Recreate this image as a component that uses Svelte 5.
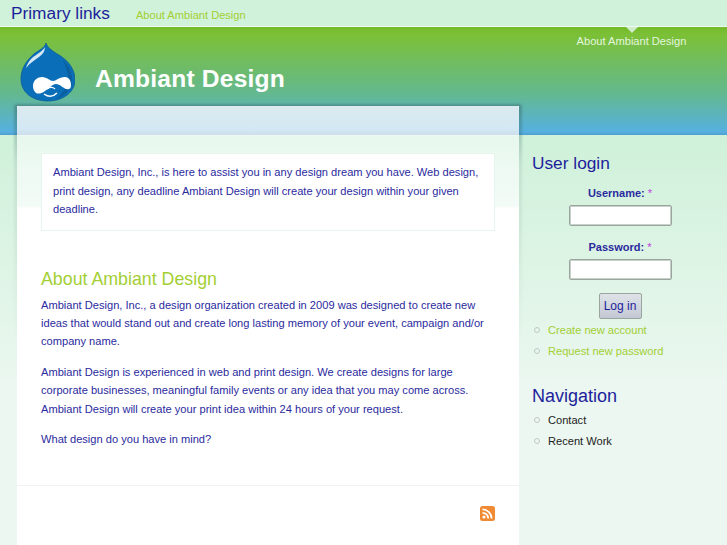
<script>
  const sidebarLinks = ['Create new account', 'Request new password'];
  const navLinks = ['Contact', 'Recent Work'];
</script>

<div class="top">
  <h2>Primary links</h2>
  <a href="#top" class="toplink">About Ambiant Design</a>
</div>

<header>
  <div class="brand">
    <svg class="logo" width="56" height="62" viewBox="0 0 56 62">
      <path d="M27 1C28 5 33 9 40 13C50 19 56 28 56 38C56 50 44 59 29 59C13 59 2 50 2 37C2 26 8 18 15 12C20 8 26 6 27 1z" fill="#0a6fb8" stroke="#0a5a9a" stroke-width=".8"/>
      <path d="M44 18C51 25 54 33 53 41C51 49 45 54 38 57C45 50 50 42 49 33C48 28 46 23 44 18z" fill="#0b5f9f"/>
      <path d="M26 5C24 9 18 12 13 16C10 19 8 22 7 26C11 21 16 18 20 15C24 12 26 9 26 5z" fill="#d6e7f4"/>
      <path d="M14 44C14 38 19 35 23 35C28 35 31 39 34 39C37 39 40 35 46 35C50 35 52 39 52 43C52 47 50 48 47 47C44 46 41 42 37 42C33 42 31 46 26 49C22 52 19 52 17 51C15 49 14 47 14 44z" fill="#fff"/>
      <path d="M25 52C29 55 34 55 38 51" fill="none" stroke="#fff" stroke-width="1.5"/>
      <path d="M28 47C31 45 34 45 36 47" fill="none" stroke="#fff" stroke-width="1.2"/>
    </svg>
    <h1>Ambiant Design</h1>
  </div>
  <nav class="secondary">
    <span class="caret"></span>
    <a href="#top">About Ambiant Design</a>
  </nav>
</header>

<div class="layout">
  <main>
    <div class="panel-head"></div>
    <div class="panel-body">
      <div class="mission">Ambiant Design, Inc., is here to assist you in any design dream you have. Web design, print design, any deadline Ambiant Design will create your design within your given deadline.</div>
      <h2 class="title">About Ambiant Design</h2>
      <p>Ambiant Design, Inc., a design organization created in 2009 was designed to create new ideas that would stand out and create long lasting memory of your event, campaign and/or company name.</p>
      <p>Ambiant Design is experienced in web and print design. We create designs for large corporate businesses, meaningful family events or any idea that you may come across. Ambiant Design will create your print idea within 24 hours of your request.</p>
      <p>What design do you have in mind?</p>
    </div>
    <footer>
      <svg width="15" height="15" viewBox="0 0 15 15">
        <rect width="15" height="15" rx="2.5" fill="#f08a34"/>
        <circle cx="4" cy="11" r="1.6" fill="#fff"/>
        <path d="M2.5 6.8a5.7 5.7 0 0 1 5.7 5.7M2.5 3.4a9.1 9.1 0 0 1 9.1 9.1" fill="none" stroke="#fff" stroke-width="1.8"/>
      </svg>
    </footer>
  </main>

  <aside>
    <h2>User login</h2>
    <form>
      <label for="u">Username: <span>*</span></label>
      <input id="u" type="text" />
      <label for="p">Password: <span>*</span></label>
      <input id="p" type="password" />
      <button type="button">Log in</button>
    </form>
    <ul class="green">
      {#each sidebarLinks as l}
        <li><a href="#top">{l}</a></li>
      {/each}
    </ul>
    <h2 class="nav-title">Navigation</h2>
    <ul class="nav-list">
      {#each navLinks as l}
        <li><a href="#top">{l}</a></li>
      {/each}
    </ul>
  </aside>
</div>

<style>
  :global(body) {
    margin: 0;
    height: 545px;
    overflow: hidden;
    font-family: "Liberation Sans", Arial, sans-serif;
    font-size: 11.1px;
    color: #2a2a9e;
    background: linear-gradient(#cff1d9 135px, #ebf7f0 385px);
  }
  a { text-decoration: none; }
  h1, h2, p, ul { margin: 0; padding: 0; }

  .top {
    height: 26px;
    display: flex;
    align-items: center;
    padding-left: 11px;
    background: #d0f2da;
    border-bottom: 1px solid #eefaf0;
  }
  .top h2 { font-size: 17.3px; font-weight: normal; color: #1e1e9c; line-height: 24px; }
  .toplink { margin-left: 26px; margin-top: 3px; color: #a3cf34; }

  header {
    height: 108px;
    display: flex;
    justify-content: space-between;
    background: linear-gradient(#74bb2a, #7cc038 8%, #64b98c 60%, #56b0e0 97%, #4d9fd0);
  }
  .brand { display: flex; align-items: flex-start; padding: 15px 0 0 19px; }
  .logo { display: block; }
  h1 { margin: 22px 0 0 20px; font-size: 24.6px; line-height: 30px; color: #fff; letter-spacing: .2px; }
  .secondary { width: 151px; margin-right: 20px; text-align: center; color: #e4f6dc; }
  .secondary a { color: #e4f6dc; display: block; margin-top: 2px; }
  .caret {
    display: block;
    width: 0;
    margin: 0 auto;
    border: 6px solid transparent;
    border-bottom: 0;
    border-top: 6px solid #cfeccb;
  }

  .layout {
    position: relative;
    z-index: 0;
    display: flex;
    align-items: flex-start;
    margin: -29px 0 0 17px;
  }
  main {
    position: relative;
    width: 502px;
    height: 439px;
    flex-shrink: 0;
    background: #fff;
  }
  main::before {
    content: "";
    position: absolute;
    z-index: -1;
    left: -3px;
    right: -3px;
    top: -2px;
    height: 240px;
    border-radius: 3px;
    filter: blur(1px);
    background: linear-gradient(rgba(50, 90, 95, .4), rgba(50, 90, 95, .1) 60px, rgba(50, 90, 95, 0));
  }
  .panel-head {
    height: 29px;
    background: linear-gradient(#dbeaef, #d3e8f4 80%, #cddfea);
    border-radius: 2px 2px 0 0;
  }
  .panel-body {
    height: 351px;
    box-sizing: border-box;
    padding: 17px 24px 0;
    background: linear-gradient(#e8f8ee, #f3fbf7 70px, #fdfefd 72px, #fff 80px);
    border-top: 1px solid #eef8f2;
    border-bottom: 1px solid #f0f3f1;
  }
  .mission {
    background: #fff;
    border: 1px solid #e4f6ee;
    padding: 9px 11px 12px;
    line-height: 18.5px;
    height: 55px;
  }
  .title { margin: 37px 0 6px; font-size: 17.8px; font-weight: normal; line-height: 22px; color: #a3cf34; }
  p { line-height: 18.2px; margin-bottom: 12.5px; }
  footer { display: flex; justify-content: flex-end; padding: 20px 24px 0 0; }

  aside { width: 175px; margin: 46px 0 0 13px; }
  aside h2 { font-size: 17.3px; font-weight: normal; line-height: 22px; color: #1e1e9c; }
  form { display: flex; flex-direction: column; align-items: center; margin: 11px 0 0; width: 176px; }
  label { font-weight: bold; font-size: 11px; line-height: 16px; }
  label span { color: #c040e0; font-weight: normal; }
  input {
    width: 103px;
    height: 21px;
    box-sizing: border-box;
    margin: 4px 0 13px;
    background: #fff;
    border: 1px solid #9aa59e;
    border-radius: 2px;
    box-shadow: inset 0 0 0 1px #c8d0ca;
  }
  button {
    width: 43px;
    height: 26px;
    padding: 0;
    font: 12px "Liberation Sans", Arial, sans-serif;
    color: #1e1e9c;
    background: linear-gradient(#dfe3e8, #c3c8d4);
    border: 1px solid #9aa59e;
    border-radius: 2px;
  }
  ul { list-style: none; }
  .nav-list { margin-top: 2px; }
  li {
    display: flex;
    align-items: center;
    height: 21px;
    padding-left: 2px;
  }
  li::before {
    content: "";
    width: 6px;
    height: 6px;
    margin-right: 8px;
    box-sizing: border-box;
    border: 1px solid #c2c8c6;
    border-radius: 50%;
  }
  li a { color: #222; }
  .green li a { color: #a3cf34; }
  aside .nav-title { margin-top: 24px; font-size: 18px; }
</style>
